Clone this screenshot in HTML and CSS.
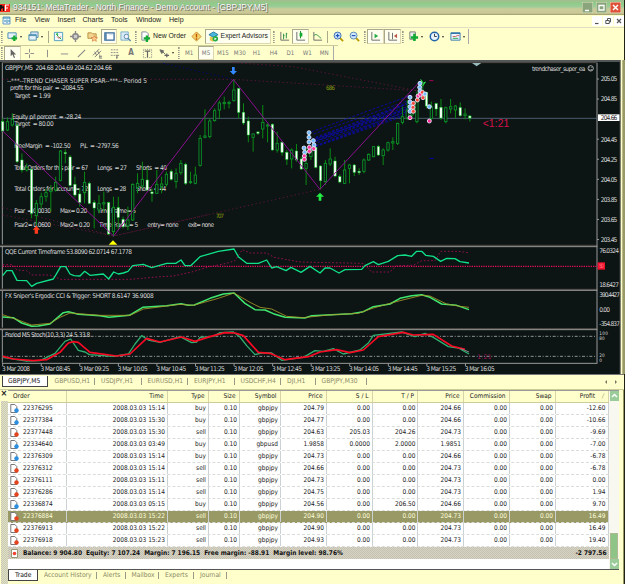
FILE: index.html
```html
<!DOCTYPE html>
<html lang="en">
<head>
  <meta charset="UTF-8" />
  <meta name="viewport" content="width=device-width, initial-scale=1" />
  <title>MetaTrader - North Finance</title>
  <link rel="stylesheet" href="styles.css">
</head>
<body>
  <div class="window">
    <header class="titlebar">
      <svg class="logo" viewBox="0 0 10 8"><path d="M0 0h10v8H0z" fill="#f32a1c"/><path d="M0 1h2l1 2 1-2v6H3V4L1 5v2H0z" fill="#111"/><path d="M5 1h4M5.500 1v6M5 4h3" stroke="#fff" stroke-width="1.200"/></svg>
      <span class="caption">934151: MetaTrader - North Finance - Demo Account - [GBPJPY,M5]</span>
      <div class="win-btns">
        <svg viewBox="0 0 11 11"><rect width="11" height="11" rx="1.500" fill="#8aa57c" stroke="#dfe7c4"/><path d="M3 8.500h4" stroke="#fff" stroke-width="1.500"/></svg>
        <svg viewBox="0 0 11 11"><rect width="11" height="11" rx="1.500" fill="#8aa57c" stroke="#dfe7c4"/><path d="M3 3.500h5v4.500H3z" fill="none" stroke="#fff" stroke-width="1.300"/></svg>
        <svg viewBox="0 0 11 11"><rect width="11" height="11" rx="1.500" fill="#dd5138" stroke="#f6d6c0"/><path d="M3 3l5 5M8 3L3 8" stroke="#fff" stroke-width="1.500"/></svg>
      </div>
    </header>

    <nav class="menubar">
      <svg class="menu-icon" viewBox="0 0 10 10"><path d="M1 1h7v7H1z" fill="#e8f4ff" stroke="#69c"/><path d="M1 2h7M3 6V4M5 7V3.500M7 6V4" stroke="#38a" stroke-width="1"/></svg>
      <span class="m-file">File</span>
      <span class="m-view">View</span>
      <span class="m-insert">Insert</span>
      <span class="m-charts">Charts</span>
      <span class="m-tools">Tools</span>
      <span class="m-window">Window</span>
      <span class="m-help">Help</span>
      <div class="mdi-btns">
        <svg viewBox="0 0 10 10"><path d="M3 7.500h3.500" stroke="#555" stroke-width="1.200"/></svg>
        <svg viewBox="0 0 10 10"><path d="M4.500 4V2.500h3V6H6.500M2.800 4.500h3.500v3H2.800z" fill="none" stroke="#555"/></svg>
        <svg viewBox="0 0 10 10"><path d="M3 3l4 4M7 3L3 7" stroke="#555" stroke-width="1.200"/></svg>
      </div>
    </nav>

    <div class="toolbar main-tools">
      <i class="grip"></i>
      <span class="tool wide"><svg viewBox="0 0 12 12"><path d="M1 2h9v6H1z" fill="#e6f2fb" stroke="#48a"/><path d="M5 8h6M8 5v6" stroke="#1a3" stroke-width="2.500"/></svg><b></b></span>
      <span class="tool wide"><svg viewBox="0 0 12 12"><path d="M3 1h8v6H3z" fill="#cfe4f6" stroke="#58a"/><path d="M1 4h8v6H1z" fill="#e6f2fb" stroke="#48a"/><path d="M1 5h8" stroke="#48a"/></svg><b></b></span>
      <i class="sep"></i>
      <span class="tool"><svg viewBox="0 0 12 12"><path d="M1.500 1.500h9v9h-9z" fill="#f0faff" stroke="#4a9ac0"/><path d="M3 4l1.500-2L6 4z" fill="#1a2"/><path d="M4.500 6l2 2 2-2" fill="none" stroke="#d33"/><path d="M7 7l2 2M4 4l2 2" stroke="#1a2"/></svg></span>
      <span class="tool"><svg viewBox="0 0 12 12"><circle cx="6" cy="6" r="3" fill="#ccc" stroke="#888" stroke-width="1.500"/><path d="M6 0v4M6 8v4M0 6h4M8 6h4" stroke="#888" stroke-width="1.500"/></svg></span>
      <span class="tool"><svg viewBox="0 0 12 12"><path d="M1 2h4l1 1h4v5H1z" fill="#f2d58e" stroke="#b98d41"/><path d="M8 5l1 2 2.500.3-1.800 1.600.5 2.400L8 10l-2.200 1.300.5-2.400-1.800-1.600L7 7z" fill="#fc8" stroke="#c63" stroke-width=".6"/></svg></span>
      <span class="tool on"><svg viewBox="0 0 12 12"><path d="M1 2h10v8H1z" fill="#fff" stroke="#369" stroke-width="1.400"/><path d="M1 2h2v8H1z" fill="#58a"/><path d="M5 4h5" stroke="#cde"/></svg></span>
      <span class="tool"><svg viewBox="0 0 12 12"><path d="M1 1h8v9H1z" fill="#d9ebf5" stroke="#7ac"/><circle cx="7" cy="6" r="2.500" fill="#eef" stroke="#58a"/><path d="M9 8l2.500 3" stroke="#58a" stroke-width="1.500"/></svg></span>
      <i class="grip"></i>
      <span class="tool order"><svg viewBox="0 0 12 12"><path d="M2 1h5l2 2v7H2z" fill="#fff" stroke="#789"/><path d="M4 8h7M7.500 5v7" stroke="#1a3" stroke-width="2.500"/></svg>New Order</span>
      <span class="tool"><svg viewBox="0 0 12 12"><path d="M6 1l5 5-5 5-5-5z" fill="#f7d267" stroke="#c83"/><path d="M6 3v4M6 8v1.500" stroke="#b50" stroke-width="1.500"/></svg></span>
      <span class="tool ea on"><svg viewBox="0 0 12 12"><path d="M1 4l5-3 5 3-5 3z" fill="#48b6dd" stroke="#279"/><path d="M2 6v4l4 2V7z" fill="#e9c84a"/><circle cx="8" cy="8.500" r="3" fill="#2a4"/><path d="M7 7l2.500 1.500L7 10z" fill="#fff"/></svg>Expert Advisors</span>
      <i class="grip after-ea"></i>
      <span class="tool"><svg viewBox="0 0 12 12"><path d="M2 1v9h9" fill="none" stroke="#666"/><path d="M5 3v6M5 5h1M8 2v6M8 3h1" stroke="#284"/></svg></span>
      <span class="tool on"><svg viewBox="0 0 12 12"><path d="M2 1v9h9" fill="none" stroke="#666"/><path d="M6 0v8" stroke="#182"/><path d="M5 2h3v4H5z" fill="#1a3"/></svg></span>
      <span class="tool"><svg viewBox="0 0 12 12"><path d="M2 1v9h9" fill="none" stroke="#666"/><path d="M2 5c3-3 5 1 8 3" fill="none" stroke="#284"/></svg></span>
      <i class="sep"></i>
      <span class="tool"><svg viewBox="0 0 12 12"><path d="M7 7l4 4" stroke="#b90" stroke-width="2"/><circle cx="5" cy="5" r="3.800" fill="#cfe6ff" stroke="#36a"/><path d="M3 5h4M5 3v4" stroke="#25b" stroke-width="1.300"/></svg></span>
      <span class="tool"><svg viewBox="0 0 12 12"><path d="M7 7l4 4" stroke="#b90" stroke-width="2"/><circle cx="5" cy="5" r="3.800" fill="#cfe6ff" stroke="#58a"/><path d="M3 5h4" stroke="#25b" stroke-width="1.300"/></svg></span>
      <i class="grip"></i>
      <span class="tool on"><svg viewBox="0 0 12 12"><path d="M2 1v9h9" fill="none" stroke="#666"/><path d="M5 3l4 2.500L5 8z" fill="#2a4"/></svg></span>
      <span class="tool on"><svg viewBox="0 0 12 12"><path d="M2 1v9h9M6 2v7" fill="none" stroke="#666"/><path d="M11 3L7.500 5.500 11 8z" fill="#b54"/></svg></span>
      <i class="grip"></i>
      <span class="tool wide"><svg viewBox="0 0 12 12"><path d="M2 1h6v8H2z" fill="#eee" stroke="#777"/><path d="M3 7h8M7 3v8" stroke="#1a3" stroke-width="2.800"/></svg><b></b></span>
      <span class="tool wide"><svg viewBox="0 0 12 12"><circle cx="6" cy="6" r="4.600" fill="#e8f4ff" stroke="#26a" stroke-width="1.600"/><path d="M6 3v3h2.500" fill="none" stroke="#333"/></svg><b></b></span>
      <span class="tool wide"><svg viewBox="0 0 12 12"><path d="M1 2h10v8H1z" fill="#eef6fc" stroke="#37a"/><path d="M1 2.500h10" stroke="#37a" stroke-width="1.500"/><path d="M3 6h3l2-1h2" fill="none" stroke="#c55"/><path d="M3 8h6" stroke="#2a4"/></svg><b></b></span>
      <i class="end"></i>
    </div>

    <div class="toolbar draw-tools">
      <i class="grip"></i>
      <span class="tool on"><svg viewBox="0 0 12 12"><path d="M4 1v8l2-2 1.500 4 1.300-.6L7.300 7H10z" fill="#666"/></svg></span>
      <span class="tool"><svg viewBox="0 0 12 12"><path d="M6 1v4M6 7v4M1 6h4M7 6h4" stroke="#888"/></svg></span>
      <i class="gap"></i>
      <span class="tool"><svg viewBox="0 0 12 12"><path d="M6 2v8" stroke="#888"/></svg></span>
      <span class="tool"><svg viewBox="0 0 12 12"><path d="M2 6.500h8" stroke="#888"/></svg></span>
      <span class="tool"><svg viewBox="0 0 12 12"><path d="M2 10l8-8" stroke="#888" stroke-width="1.200"/></svg></span>
      <span class="tool"><svg viewBox="0 0 12 12"><path d="M1 8l7-7M3 10l7-7M3 4l2 4M6 3l2 4M8 9h3M8 11h3M8.500 8v3" stroke="#777"/></svg></span>
      <span class="tool"><svg viewBox="0 0 12 12"><path d="M2 2h8M2 5h8M2 8h5" stroke="#888" stroke-dasharray="2 1"/><path d="M8 8h3M8 10h2M8.500 7.500V12" stroke="#777"/></svg></span>
      <span class="tool letter">A</span>
      <span class="tool"><svg viewBox="0 0 12 12"><path d="M1.500 1.500h9v9h-9z" fill="none" stroke="#888" stroke-dasharray="1 1"/><path d="M3 3.500h6M6 3.500V10" stroke="#666" stroke-width="1.300"/></svg></span>
      <span class="tool wide"><svg viewBox="0 0 12 12"><path d="M1 2l4 1-2 3zM4 4l3 3" stroke="#666" fill="#666"/><path d="M6 8h5M8.500 6v4" stroke="#666" stroke-width="1.400"/></svg><b></b></span>
      <i class="grip"></i>
      <span class="period">M1</span>
      <span class="period on">M5</span>
      <span class="period">M15</span>
      <span class="period">M30</span>
      <span class="period">H1</span>
      <span class="period">H4</span>
      <span class="period">D1</span>
      <span class="period">W1</span>
      <span class="period">MN</span>
      <i class="end"></i>
    </div>

    <!-- chart canvas, three units per pixel -->
    <svg class="chart" viewBox="0 0 1875 942" preserveAspectRatio="none">
      <rect class="canvas-bg" width="1875" height="942"/>
      <path class="frame" d="M0 3H1860M7 8V553M7 557V686M7 692V803M7 809V908"/>
      <path class="frame dim" d="M6 8H1792M0 556H1792M0 688H1792M0 806H1792"/>
      <path class="frame" d="M1791 9V910M6 910H1792M0 560H1792M0 691H1792M0 809H1792"/>

      <!-- price pane -->
      <path class="price-line" d="M8 175H1792"/>
      <g class="dots-red">
        <path d="M8 58H700L1250 92"/>
        <path d="M8 465L341 528L630 463"/>
        <path d="M8 443L341 528L960 388"/>
        <path d="M700 8L880 20L1250 92"/>
      </g>
      <path class="dots-blue" d="M490 10L700 58"/>

      <g class="label">
        <text x="15" y="30" textLength="321">GBPJPY,M5&#160; 204.68 204.69 204.62 204.66</text>
        <text x="21" y="69" textLength="420">--***--TREND CHASER SUPER PSAR--***-- Period 5</text>
        <text x="30" y="91" textLength="221">profit for this pair&#160; = -2084.55</text>
        <text x="43" y="113" textLength="109">Target&#160; = 1.99</text>
        <text x="36" y="177" textLength="208">Equity p/l percent&#160; = -28.24</text>
        <text x="43" y="199" textLength="118">Target&#160; = 80.00</text>
        <text x="43" y="264" textLength="169">FreeMargin&#160; = -102.50</text>
        <text x="240" y="264" textLength="116">P\L&#160; = -2797.56</text>
        <text x="43" y="329" textLength="222">Total Orders for this pair = 67</text>
        <text x="292" y="329" textLength="89">Longs&#160; = 27</text>
        <text x="408" y="329" textLength="93">Shorts&#160; = 40</text>
        <text x="43" y="394" textLength="222">Total Orders for account= 72</text>
        <text x="292" y="394" textLength="87">Longs&#160; = 28</text>
        <text x="408" y="394" textLength="91">Shorts&#160; = 44</text>
        <text x="43" y="459" textLength="110">Psar&#160; = 0.0030</text>
        <text x="180" y="459" textLength="82">Max= 0.20</text>
        <text x="292" y="459" textLength="116">Time Frame= 5</text>
        <text x="43" y="502" textLength="110">Psar2= 0.0600</text>
        <text x="180" y="502" textLength="90">Max2= 0.20</text>
        <text x="297" y="502" textLength="118">Time Frame= 5</text>
        <text x="442" y="502" textLength="94">entry= none</text>
        <text x="564" y="502" textLength="78">exit= none</text>
        <text x="1596" y="32" textLength="160">trendchaser_super_ea</text>
      </g>

      <g id="trades"></g>
      <g id="candles"></g>
      <path class="zigzag" d="M8 213L341 528L700 58L960 388L1262 62"/>
      <g id="marks"></g>
      <path d="M109 498l11 11h-6v12h-10v-12h-6z" fill="#ff3a1c"/>
      <path d="M339 541l13 13h-26z" fill="#ff0"/>
      <path d="M700 44l-11-11h7V21h8v12h7z" fill="#38f"/>
      <path d="M960 398l12 12h-8v12h-8v-12h-8z" fill="#2e4"/>
      <path d="M1416 9h28l-14 10z" fill="#9bb"/>
      <path d="M1288 62h12" stroke="#a05" stroke-width="3"/>
      <path d="M1288 295h13" stroke="#00a" stroke-width="3"/>
      <circle cx="1772" cy="25" r="8" fill="none" stroke="#ccc" stroke-width="2.500"/>
      <path d="M1768 28q4 4 8 0M1769 22v2M1775 22v2" fill="none" stroke="#ccc" stroke-width="2"/>
      <text class="lime" x="647" y="474" textLength="25">707</text>
      <text class="lime" x="978" y="91" textLength="27">686</text>
      <text class="countdown" x="1448" y="202" textLength="80">&lt;1:21</text>

      <!-- QQE pane -->
      <g transform="translate(0 552)">
        <path class="level" d="M8 67H1790"/>
        <path class="dots-pink" d="M8 62H36L51 78L80 80L95 93H150L182 106H390L470 99L520 96L575 84L628 68L680 58L705 50L727 17L750 27H800L822 40L900 54L1090 58L1115 84H1170L1190 65L1240 64L1265 50L1305 50L1322 22H1375L1405 26"/>
        <path class="line teal" d="M8 95L20 80H36L51 109L80 110L95 127L110 118L160 105L168 92L182 68H197L210 90L222 95L240 96L254 82L270 94L310 90L326 105L341 84L355 90L370 87L384 82L398 65L430 61L455 71L500 58H527L543 48L555 65H572L600 38L655 22L702 15L715 38L740 58H775L800 48L815 72L830 68L858 80L873 70L903 85L930 67L960 87L975 72H990L1017 87L1035 77L1085 76L1095 65L1120 53L1135 62L1165 52L1193 35L1215 33L1235 37L1250 22H1265L1277 34L1300 37L1322 52L1340 43L1365 44L1380 53L1407 57"/>
        <text class="label" x="15" y="31" textLength="381">QQE Current Timeframe 53.8090 62.0714 67.1778</text>
        <rect x="1793" y="55" width="22" height="22" fill="#f0102c"/>
        <text x="1797" y="73" textLength="15" font-size="18" fill="#ff6a78">50</text>
      </g>

      <!-- Ergodic CCI pane -->
      <g transform="translate(0 552)">
        <path class="line lime-line" d="M8 219L40 221L65 237L95 247L115 246L150 240L190 206L205 203L235 211L300 215L327 220L388 214L428 190L500 185L543 179L565 184L583 183L630 163L670 150L702 147L735 178L765 197L795 198L820 209L855 220L915 222L935 215L1055 209L1090 203L1120 188L1170 180L1200 163L1235 155L1265 152L1290 160L1325 180L1370 184L1407 197"/>
        <path class="line gold" d="M8 212L60 230L95 243L150 238L180 220L210 207L300 214L390 214L430 195L540 181L580 184L655 163L702 147L750 175L780 190L815 195L860 217L910 221L985 213L1075 208L1120 192L1200 170L1265 154L1290 156L1340 180L1380 187L1407 190"/>
        <text class="label" x="15" y="163" textLength="446">FX Sniper's Ergodic CCI &amp; Trigger: SHORT 8.6147 36.9008</text>
      </g>

      <!-- stochastic pane -->
      <g transform="translate(0 552)">
        <path class="band" d="M8 277H1790M8 337H1790"/>
        <path class="line sea" d="M8 340L50 347L80 351L120 350L165 328L195 292L212 285L235 319L255 324L268 332L300 334L340 337L385 330L405 300L425 275L445 288L480 295L540 278L575 296L590 294L600 280L640 277L660 266L700 264L720 279L740 305L765 332L785 327L815 327L845 349L910 340L945 320L970 322L1000 314L1030 330L1080 318L1105 297L1120 274L1205 264L1245 278L1275 268L1300 280L1345 308L1375 312L1407 330"/>
        <path class="line red" d="M8 337L40 345L100 350L140 347L180 325L205 297L220 293L235 295L270 325L350 336L390 330L440 283L480 294L545 279L585 292L630 278L675 266L705 267L730 275L775 325L810 328L855 347L925 338L960 324L1010 317L1050 326L1090 318L1135 278L1210 265L1240 273L1300 271L1355 306L1395 316"/>
        <path class="line gray" d="M1382 314L1407 324"/>
        <text class="label" x="15" y="279" textLength="256">Period M5 Stoch(10,3,3) 24.5 33.8</text>
        <text class="small-count" x="1432" y="346" textLength="42">1:21</text>
      </g>

      <g id="axis" class="label"></g>
      <path d="M1859 0h3v942h-3z" fill="#555"/>
      <path d="M1862 0h7v942h-7z" fill="#ffffcc"/>
      <path d="M1867 0h8v942h-8z" fill="#999966"/>
    </svg>

    <div class="tabs chart-tabs">
      <span class="tab active">GBPJPY,M5</span>
      <span class="tab">GBPUSD,H1</span>
      <span class="tab">USDJPY,H1</span>
      <span class="tab">EURUSD,H1</span>
      <span class="tab">EURJPY,H1</span>
      <span class="tab">USDCHF,H4</span>
      <span class="tab short">DJI,H1</span>
      <span class="tab long">GBPJPY,M30</span>
      <svg class="scroll-arrows" viewBox="0 0 16 8"><path d="M4 2v4L2 4zM12 2v4l2-2z" fill="#776"/></svg>
    </div>

    <section class="terminal">
      <aside class="gutter"><span>×</span><i></i></aside>
      <div class="panel">
        <div class="sheet">
          <div class="grid">
            <div class="row head">
              <span>Order</span><span>Time</span><span>Type</span><span>Size</span><span>Symbol</span><span>Price</span><span>S / L</span><span>T / P</span><span>Price</span><span>Commission</span><span>Swap</span><span>Profit<em>/</em></span>
            </div>
            <div id="orders"></div>
            <div class="balance">
              <svg viewBox="0 0 9 9"><path d="M1.500.5h6v8h-6z" fill="#fff" stroke="#997"/><circle cx="4.500" cy="4.500" r="1.800" fill="#e43"/></svg>
              <span class="sum">Balance: 9 904.80&#160; Equity: 7 107.24&#160; Margin: 7 196.15&#160; Free margin: -88.91&#160; Margin level: 98.76%</span>
              <span class="total">-2 797.56</span>
            </div>
          </div>
          <div class="scrollbar">
            <svg viewBox="0 0 9 10"><path d="M0 0h9v10H0z" fill="#9c9"/><path d="M2 6l2.500-2.500L7 6" fill="none" stroke="#fff" stroke-width="1.500"/></svg>
            <i class="thumb"></i>
            <svg viewBox="0 0 9 10"><path d="M0 0h9v10H0z" fill="#9c9"/><path d="M2 4l2.500 2.500L7 4" fill="none" stroke="#fff" stroke-width="1.500"/></svg>
          </div>
        </div>
        <div class="tabs term-tabs">
          <span class="tab active">Trade</span>
          <span class="tab t-history">Account History</span>
          <span class="tab t-alerts">Alerts</span>
          <span class="tab t-mail">Mailbox</span>
          <span class="tab t-experts">Experts</span>
          <span class="tab t-journal">Journal</span>
        </div>
      </div>
    </section>
  </div>

  <script src="chart.js"></script>
</body>
</html>
```

FILE: styles.css
```css
/* Reset */
* {
  box-sizing: border-box;
}
html, body {
  margin: 0;
  padding: 0;
}
body {
  width: 625px;
  height: 584px;
  overflow: hidden;
  background: #ffffcc;
  font-family: "DejaVu Sans Condensed", "DejaVu Sans", sans-serif;
  font-stretch: condensed;
  font-size: 6.5px;
  line-height: 1;
  color: #222;
}
svg {
  display: block;
  flex: none;
}

.window {
  width: 625px;
  height: 584px;
  display: flex;
  flex-direction: column;
  border-right: 1px solid #222211;
}

/* Title bar */
.titlebar {
  height: 15px;
  flex: none;
  display: flex;
  align-items: center;
  padding-right: 3px;
  background: linear-gradient(#a3bd8e 0, #8fcc8a 25%, #9dcc99 45%, #cccc99 60%, #c9c896 88%, #999966);
}
.logo {
  width: 10px;
  height: 8px;
}
.caption {
  margin-left: 3px;
  font-family: "Liberation Sans", sans-serif;
  font-size: 8.35px;
  color: #fff;
  text-shadow: 1px 1px 0 #776, 0 0 1px #776;
  white-space: nowrap;
  flex: 1;
}
.win-btns {
  display: flex;
  gap: 3px;
}
.win-btns svg {
  width: 11px;
  height: 11px;
}

/* Menu */
.menubar {
  height: 13px;
  flex: none;
  display: flex;
  align-items: center;
  font-family: "Liberation Sans", sans-serif;
  font-size: 7.1px;
  padding-left: 2px;
  border-bottom: 1px solid #e2dfc0;
}
.menu-icon {
  width: 10px;
  height: 10px;
  margin-right: 3px;
}
.m-file { width: 19.5px; }
.m-view { width: 23px; }
.m-insert { width: 25px; }
.m-charts { width: 28.5px; }
.m-tools { width: 25px; }
.m-window { width: 33px; }
.mdi-btns {
  margin-left: auto;
  display: flex;
  gap: 1px;
}
.mdi-btns svg {
  width: 10px;
  height: 10px;
  background: #fff;
}

/* Toolbars */
.toolbar {
  flex: none;
  display: flex;
  align-items: center;
}
.main-tools {
  height: 17px;
}
.draw-tools {
  height: 15px;
  width: 338px;
  border-top: 1px solid #cccc99;
}
.tool {
  width: 16.7px;
  height: 15px;
  flex: none;
  display: flex;
  align-items: center;
  justify-content: center;
}
.tool svg {
  width: 11px;
  height: 11px;
}
.tool.wide {
  width: 21.3px;
}
.draw-tools .tool.wide {
  width: 20.5px;
}
.tool b {
  margin-left: 2px;
  border: 1.5px solid transparent;
  border-top: 2px solid #333;
  border-bottom: 0;
}
.tool.on, .period.on {
  background: #fffff0;
  border: 1px solid #ddd8b0;
  border-top-color: #aaa98a;
  border-left-color: #aaa98a;
}
.order, .ea {
  font-family: "Liberation Sans", sans-serif;
  font-size: 6.8px;
  gap: 2px;
  white-space: nowrap;
}
.tool.order {
  width: 50px;
}
.tool.ea {
  width: 66px;
}
.after-ea.grip {
  margin-left: 2px;
}
.letter {
  font-weight: bold;
  font-size: 8px;
  color: #777;
}
.grip {
  flex: none;
  width: 2px;
  height: 12px;
  margin: 0 1px;
  border-left: 1px dotted #998;
  border-right: 1px dotted #bba;
}
.sep {
  flex: none;
  width: 1px;
  height: 12px;
  margin: 0 1.5px;
  background: #aaa98a;
}
.gap {
  width: 2px;
}
.end {
  width: 1px;
  height: 15px;
  background: #aaa;
}
.period {
  width: 16.9px;
  height: 14px;
  flex: none;
  display: flex;
  align-items: center;
  justify-content: center;
  font-size: 6.2px;
  color: #777;
}

/* Chart */
.chart {
  width: 625px;
  height: 314px;
  margin-right: -1px;
}
.canvas-bg { fill: #0c1414; }
.frame {
  fill: none;
  stroke: #999;
  stroke-width: 3;
}
.frame.dim {
  stroke: #554f4a;
}
.price-line {
  stroke: #566b80;
  stroke-width: 2.5;
}
.dots-red, .dots-blue, .dots-pink {
  fill: none;
  stroke: #66163f;
  stroke-width: 2.5;
  stroke-dasharray: 4 8;
}
.dots-blue { stroke: #000080; }
.dots-pink {
  stroke: #b0105a;
  stroke-dasharray: 5 6;
}
.zigzag {
  fill: none;
  stroke: #8a108f;
  stroke-width: 3;
}
.trade {
  stroke: #0b0b9a;
  stroke-width: 3;
  stroke-dasharray: 8 5;
}
.wick {
  stroke: #0a8a12;
  stroke-width: 3;
}
.body-up {
  fill: #0c1414;
  stroke: #0c9a2a;
  stroke-width: 2.5;
}
.body-down {
  fill: #fff;
  stroke: #19d430;
  stroke-width: 1.5;
}
.label {
  fill: #d8d8d8;
  font-size: 19.5px;
}
.lime {
  fill: #8a9c10;
  font-size: 18px;
}
.countdown {
  fill: #d8104a;
  font-family: "Liberation Sans", sans-serif;
  font-size: 31px;
}
.small-count {
  fill: #a0105a;
  font-size: 19px;
}
.level {
  stroke: #d8105a;
  stroke-width: 4;
  stroke-dasharray: 4 3;
}
.band {
  stroke: #aaa;
  stroke-width: 2.5;
  stroke-dasharray: 9 5 3 5;
}
.line {
  fill: none;
  stroke-width: 4;
  stroke-linejoin: round;
}
.teal { stroke: #10e088; }
.line.gold { stroke: #a89a28; stroke-width: 2.5; }
.line.lime-line { stroke: #40e870; stroke-width: 4.5; }
.sea { stroke: #2fb070; }
.line.red { stroke: #f80a24; stroke-width: 5; }
.line.gray { stroke: #888; stroke-width: 3; }

/* Tabs */
.tabs {
  display: flex;
  align-items: flex-start;
  flex: none;
  color: #8a8866;
  font-size: 6.7px;
}
.chart-tabs {
  height: 16px;
  padding: 1px 5px 0 2px;
  border-top: 1px solid #777;
  border-bottom: 1px solid #cccc99;
}
.tab {
  height: 11px;
  flex: none;
  display: flex;
  align-items: center;
  position: relative;
  white-space: nowrap;
}
.chart-tabs .tab {
  width: 46.5px;
  padding-left: 6px;
}
.chart-tabs .tab.short { width: 34.5px; }
.chart-tabs .tab.long { width: 51px; }
.tab:not(.active)::after {
  content: "";
  position: absolute;
  right: 0;
  top: 2px;
  height: 7px;
  border-right: 1px solid #998;
}
.tab.active {
  background: #fff;
  color: #111;
  border: 1px solid #444;
  border-top: 0;
}
.chart-tabs .tab.active {
  width: 45.5px;
  padding-left: 5px;
  margin-right: 1px;
}
.scroll-arrows {
  width: 16px;
  height: 8px;
  margin: 2px 0 0 auto;
}

/* Terminal */
.terminal {
  flex: 1;
  display: flex;
  min-height: 0;
  padding-right: 4px;
  border-right: 1px solid #999966;
}
.gutter {
  width: 9px;
  display: flex;
  flex-direction: column;
  align-items: center;
}
.gutter span {
  height: 11px;
  font-size: 9px;
  line-height: 7px;
  font-weight: bold;
}
.gutter i {
  flex: 1;
  width: 7px;
  background: repeating-conic-gradient(#cccca8 0 25%, #deded0 0 50%) 0 0 / 2px 2px;
}
.panel {
  flex: 1;
  display: flex;
  flex-direction: column;
}
.sheet {
  height: 180px;
  display: flex;
  background: #fff;
  border-top: 1px solid #999;
  border-bottom: 1px solid #555;
}
.grid {
  width: 601px;
}
.row {
  display: grid;
  grid-template-columns: 58.5px 101px 41px 31px 41px 46px 46px 45.5px 45.5px 46px 46px 53.5px;
  height: 12px;
  border-bottom: 1px dashed #d9dcd8;
}
.row span {
  display: flex;
  align-items: center;
  justify-content: flex-end;
  padding-right: 1.5px;
  border-right: 1px solid #ccd2d4;
  white-space: nowrap;
}
.row span:first-child {
  justify-content: flex-start;
  padding-left: 2px;
}
.row span:last-child {
  padding-right: 2.5px;
}
.row svg {
  width: 9px;
  height: 9px;
  margin-right: 4px;
}
.row.head {
  background: #ffffcc;
  border-bottom: 1px solid #cccc99;
}
.row.head span {
  padding-right: 3px;
  border-color: #d8d4a8;
}
.row.head span:first-child {
  padding-left: 5px;
}
.row.head em {
  margin: 0 1px 0 7px;
  color: #999966;
}
.row.selected {
  background: #999966;
  color: #ffffdd;
}
.balance {
  height: 12px;
  display: flex;
  align-items: center;
  padding: 0 2.5px 0 1px;
  background: repeating-conic-gradient(#c6c2b2 0 25%, #d6d2c4 0 50%) 0 0 / 2px 2px;
  font-weight: bold;
  color: #111;
}
.balance svg {
  width: 9px;
  height: 9px;
  margin: 0 4px 0 1px;
}
.sum {
  white-space: pre;
}
.total {
  margin-left: auto;
}
.scrollbar {
  width: 10px;
  display: flex;
  flex-direction: column;
  align-items: center;
  background: #f8f8f0;
}
.scrollbar svg {
  width: 9px;
  height: 10px;
}
.thumb {
  width: 8px;
  height: 26px;
  margin-top: auto;
  background: #8fc487;
  border: 1px solid #b0b890;
}
.term-tabs .tab {
  padding-left: 6px;
}
.term-tabs .tab.active {
  width: 30px;
}
.t-history { width: 59px; }
.t-alerts { width: 28.5px; }
.t-mail { width: 33.5px; }
.t-experts { width: 35px; }
.t-journal { width: 33px; }
```

FILE: chart.js
```js
const NS = 'http://www.w3.org/2000/svg';

function add(parent, tag, attrs, text) {
  const el = document.createElementNS(NS, tag);
  for (const key in attrs) el.setAttribute(key, attrs[key]);
  if (text) el.textContent = text;
  document.getElementById(parent).appendChild(el);
}

// high, body top, body bottom, low, 1 = falling bar
const bars = [
  [175,185,213,215,1],[172,185,210,213,0],[160,178,195,200,0],[190,197,305,310,1],[280,300,330,338,1],
  [310,322,330,335,0],[325,328,460,475,1],[420,430,467,495,0],[398,410,432,445,0],[385,398,410,425,0],
  [375,390,395,455,0],[350,367,390,395,0],[270,273,361,364,0],[268,278,281,310,1],[285,291,376,380,1],
  [350,373,405,412,1],[385,402,427,440,1],[335,367,398,430,0],[365,370,430,433,1],[420,428,444,505,1],
  [405,430,450,460,0],[395,428,432,455,0],[425,428,522,525,1],[410,442,515,530,0],[410,443,472,510,1],
  [470,478,500,505,1],[440,480,498,510,0],[370,373,480,483,0],[340,370,382,400,0],[305,358,378,385,0],
  [325,360,390,395,1],[385,396,401,425,1],[330,373,400,402,0],[350,372,380,400,0],[335,343,373,380,0],
  [328,334,358,362,1],[325,340,365,385,0],[300,310,338,345,0],[308,313,370,375,1],[335,365,368,372,0],
  [320,345,370,373,0],[225,235,316,320,0],[148,228,232,235,0],[175,183,230,235,0],[145,152,182,185,0],
  [122,129,150,177,0],[110,127,131,148,0],[122,127,131,145,0],[58,90,122,125,0],[84,86,157,175,1],
  [130,157,189,195,1],[170,183,225,247,1],[220,222,232,275,0],[213,216,220,225,1],[135,187,207,235,0],
  [190,195,198,247,0],[190,193,270,272,1],[215,250,270,278,0],[243,247,277,287,1],[270,277,298,315,1],
  [265,270,297,325,0],[252,273,300,305,1],[290,297,327,330,1],[265,310,325,375,0],[265,275,290,300,0],
  [260,262,322,325,1],[315,318,362,388,1],[300,310,365,375,0],[265,297,312,318,0],[290,303,348,352,1],
  [343,350,366,370,1],[300,330,370,372,0],[312,315,325,370,0],[312,315,337,348,1],[325,334,338,345,1],
  [295,300,334,340,0],[280,283,300,303,0],[258,260,290,292,0],[255,260,285,288,1],[265,270,287,315,0],
  [245,248,270,275,0],[232,245,249,270,0],[188,190,250,255,0],[140,170,187,193,0],[120,150,175,180,0],
  [140,150,165,170,0],[95,125,185,190,0],[60,75,100,110,0],[95,97,138,145,1],[125,140,175,180,0],
  [128,131,147,168,1],[117,142,174,180,1],[140,143,185,190,0],[117,140,147,160,0],[135,138,150,175,0],
  [127,143,167,170,1],[145,162,167,178,0],[165,168,174,185,1]
];

bars.forEach(([high, top, bottom, low, down], i) => {
  const x = 8 + i * 14.45;
  add('candles', 'path', { class: 'wick', d: `M${x} ${high}V${low}` });
  add('candles', 'rect', {
    class: down ? 'body-down' : 'body-up',
    x: x - 3.5, y: top, width: 7, height: bottom - top
  });
});

// entry price -> exit price of every closed trade
[[215,105],[222,118],[232,124],[238,128],[240,135],[244,140],[248,144],[252,150],[258,155],[264,160],[245,126],[236,142],[262,148]].forEach(([y1, y2], i) => {
  add('trades', 'path', { class: 'trade', d: `M${935 + i % 3 * 6} ${y1}L1235 ${y2}` });
});

const blue = '#6fbcff', pink = '#ff2f9a', red = '#f5483a';
[
  [927,218,blue],[927,232,blue],[927,246,blue],[940,242,blue],[912,264,blue],[914,277,blue],[942,255,blue],
  [928,262,pink],[928,274,pink],[941,266,pink],[913,288,pink],[913,298,pink],
  [1230,112,blue],[1230,126,blue],[1230,140,blue],[1230,154,blue],[1230,173,pink],
  [1240,130,red],[1239,142,red],[1240,154,red],[1252,120,red],[1254,108,pink],
  [1260,70,blue],[1259,82,blue],[1260,93,blue],[1261,103,pink],[1267,97,red],[1275,102,blue],[1269,113,red],
  [1288,140,blue],[1288,183,pink]
].forEach(([cx, cy, fill]) => {
  add('marks', 'circle', { cx, cy, r: 6, fill, stroke: '#f0f0ff', 'stroke-width': 2.5 });
});
add('marks', 'path', { d: 'M1262 58l8 12 6-4-8 12', fill: 'none', stroke: '#2e4', 'stroke-width': 3 });

// price scale
['205.05', '204.85', '', '204.45', '204.25', '204.05', '203.85', '203.65', '203.45'].forEach((price, i) => {
  const y = 57 + i * 60.2;
  if (!price) return;
  add('axis', 'path', { d: `M1791 ${y}h6`, stroke: '#999', 'stroke-width': 3 });
  add('axis', 'text', { x: 1802, y: y + 7, textLength: 50 }, price);
});
add('axis', 'rect', { x: 1794, y: 163, width: 65, height: 20, fill: '#fff' });
add('axis', 'text', { x: 1802, y: 180, textLength: 50, style: 'fill:#222' }, '204.66');

[['76.0324',579,59],['18.6427',681,59],['390.4427',711,62],['0.00',755,32],['-354.837',799,62]].forEach(([t, y, w]) => {
  add('axis', 'text', { x: 1798, y, textLength: w }, t);
});
// the stochastic levels sit tight together
[['100',825,26],['80',840,16],['20',892,16],['0',907,8]].forEach(([t, y, w]) => {
  add('axis', 'text', { x: 1798, y, textLength: w, 'class': 'level-label', style: 'font-size:14px' }, t);
});

// time scale
['3 Mar 2008','3 Mar 08:45','3 Mar 09:25','3 Mar 10:05','3 Mar 10:45','3 Mar 11:25','3 Mar 12:05','3 Mar 12:45','3 Mar 13:25','3 Mar 14:05','3 Mar 14:45','3 Mar 15:25','3 Mar 16:05'].forEach((t, i) => {
  const x = 8 + i * 115.7;
  add('axis', 'path', { d: `M${x} 910v8`, stroke: '#999', 'stroke-width': 3 });
  add('axis', 'text', { x: x - 2, y: 934, textLength: i ? 90 : 84 }, t);
});

const orders = [
  ['22376295','2008.03.03 15:14','buy','0.10','gbpjpy','204.79','0.00','0.00','204.66','0.00','0.00','-12.60'],
  ['22377384','2008.03.03 15:30','buy','0.10','gbpjpy','204.77','0.00','0.00','204.66','0.00','0.00','-10.66'],
  ['22377448','2008.03.03 15:30','sell','0.10','gbpjpy','204.63','205.03','204.26','204.73','0.00','0.00','-9.69'],
  ['22334640','2008.03.03 03:49','buy','0.10','gbpusd','1.9858','0.0000','2.0000','1.9851','0.00','0.00','-7.00'],
  ['22376309','2008.03.03 15:14','buy','0.10','gbpjpy','204.73','0.00','0.00','204.66','0.00','0.00','-6.78'],
  ['22376312','2008.03.03 15:14','sell','0.10','gbpjpy','204.66','0.00','0.00','204.73','0.00','0.00','-6.78'],
  ['22376111','2008.03.03 15:11','sell','0.10','gbpjpy','204.73','0.00','0.00','204.73','0.00','0.00','0.00'],
  ['22376286','2008.03.03 15:14','sell','0.10','gbpjpy','204.75','0.00','0.00','204.73','0.00','0.00','1.94'],
  ['22336874','2008.03.03 05:15','buy','0.10','gbpjpy','204.56','0.00','206.50','204.66','0.00','0.00','9.70'],
  ['22376884','2008.03.03 15:22','sell','0.10','gbpjpy','204.90','0.00','0.00','204.73','0.00','0.00','16.49'],
  ['22376913','2008.03.03 15:22','sell','0.10','gbpjpy','204.90','0.00','0.00','204.73','0.00','0.00','16.49'],
  ['22376918','2008.03.03 15:23','sell','0.10','gbpjpy','204.93','0.00','0.00','204.73','0.00','0.00','19.40']
];

document.getElementById('orders').innerHTML = orders.map((o, i) => {
  const dot = o[2] === 'buy' ? '#2a8fe0' : '#e5421e';
  const icon = `<svg viewBox="0 0 9 9"><path d="M.8.5h4l2 2v6h-6z" fill="#fff" stroke="#777"/><circle cx="6.500" cy="6.500" r="2.200" fill="${dot}"/></svg>`;
  const cells = o.map((c, n) => `<span>${n ? '' : icon}${c}</span>`).join('');
  return `<div class="row${i === 9 ? ' selected' : ''}">${cells}</div>`;
}).join('');
```
